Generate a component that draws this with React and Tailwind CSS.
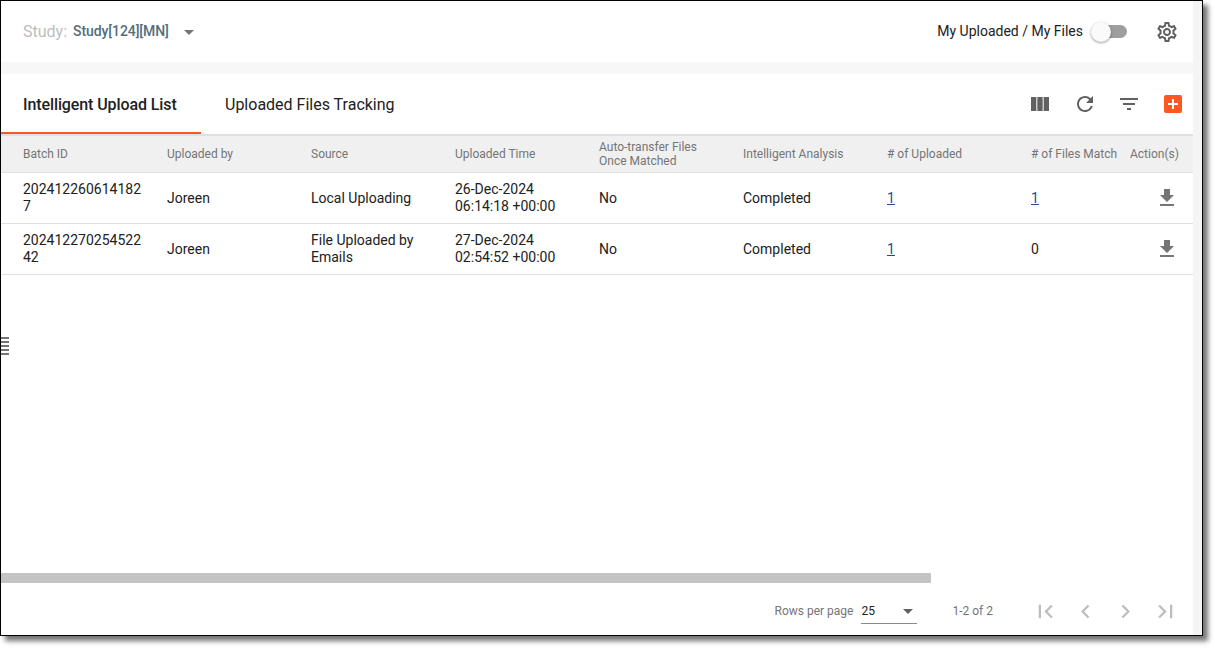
import React from "react";
import {
  MdArrowDropDown,
  MdChevronLeft,
  MdChevronRight,
  MdFilterList,
  MdFirstPage,
  MdGetApp,
  MdLastPage,
  MdOutlineSettings,
  MdRefresh,
  MdViewColumn,
} from "react-icons/md";

const columns = [
  "Batch ID",
  "Uploaded by",
  "Source",
  "Uploaded Time",
  "Auto-transfer Files Once Matched",
  "Intelligent Analysis",
  "# of Uploaded",
];

const rows = [
  {
    id: "2024122606141827",
    by: "Joreen",
    source: "Local Uploading",
    time: ["26-Dec-2024", "06:14:18 +00:00"],
    match: "1",
  },
  {
    id: "20241227025452242",
    by: "Joreen",
    source: "File Uploaded by Emails",
    time: ["27-Dec-2024", "02:54:52 +00:00"],
    match: "0",
  },
];

function Cell({ children, className = "" }) {
  return <div className={`w-[144px] shrink-0 pl-[22px] pr-[16px] ${className}`}>{children}</div>;
}

function CountLink({ value }) {
  return <a className="text-[#1a4f8f] underline">{value}</a>;
}

export default function App() {
  return (
    <div className="h-[648px] w-[1215px] bg-white font-['Roboto',sans-serif]">
      <div className="flex h-[636px] w-[1203px] border border-black shadow-[5px_5px_5px_rgba(0,0,0,0.55)]">
        <div className="flex w-[1192px] shrink-0 flex-col">
          <div className="flex h-[61px] items-center pl-[22px] pr-[14px]">
            <span className="text-[16px] text-[#bdbdbd]">Study:</span>
            <span className="ml-[6px] text-[14px] font-medium tracking-[-0.08px] text-[#546e7a]">Study[124][MN]</span>
            <MdArrowDropDown className="ml-[8px] text-[24px] text-[#757575]" />
            <span className="ml-auto text-[14px] text-[#212121]">My Uploaded / My Files</span>
            <div className="relative ml-[9px] h-[13px] w-[35px] rounded-full bg-[#9e9e9e]">
              <div className="absolute left-[-1px] top-[-3px] h-[20px] w-[20px] rounded-full bg-[#fafafa] shadow-[0_1px_3px_rgba(0,0,0,0.4)]" />
            </div>
            <MdOutlineSettings className="ml-[28px] text-[24px] text-[#616161]" />
          </div>

          <div className="h-[12px] bg-[#f7f7f7]" />

          <div className="flex h-[60px] items-stretch">
            <div className="flex w-[200px] items-center border-b-2 border-[#ff5722] pl-[22px] pt-[3px] text-[16px] font-medium tracking-[-0.1px] text-[#212121]">
              Intelligent Upload List
            </div>
            <div className="flex items-center pl-[24px] pt-[2px] text-[16px] text-[#212121]">Uploaded Files Tracking</div>
            <div className="ml-auto flex items-center pr-[11px] text-[#616161]">
              <MdViewColumn className="text-[24px]" />
              <MdRefresh className="ml-[21px] text-[24px]" />
              <MdFilterList className="ml-[20px] text-[24px]" />
              <div className="ml-[23px] flex h-[18px] w-[18px] items-center justify-center rounded-[2px] bg-[#ff5722]">
                <svg width="12" height="12" viewBox="0 0 12 12">
                  <path d="M5 1h2v4h4v2H7v4H5V7H1V5h4z" fill="#fff" />
                </svg>
              </div>
            </div>
          </div>

          <div className="flex h-[39px] items-center border-y border-t-2 border-y-[#e0e0e0] bg-[#f0f0f0] text-[12px] leading-[14px] text-[#757575]">
            {columns.map((col) => (
              <Cell key={col}>{col}</Cell>
            ))}
            <Cell className="!w-[121px] !pr-0 whitespace-nowrap"># of Files Match</Cell>
            <span className="whitespace-nowrap">Action(s)</span>
          </div>
          {rows.map((row) => (
            <div key={row.id} className="flex h-[51px] items-center border-b border-[#e0e0e0] text-[14px] leading-[17px] text-[#212121]">
              <Cell className="break-all !pr-[3px]">{row.id}</Cell>
              <Cell>{row.by}</Cell>
              <Cell>{row.source}</Cell>
              <Cell>
                {row.time[0]}
                <br />
                {row.time[1]}
              </Cell>
              <Cell>No</Cell>
              <Cell>Completed</Cell>
              <Cell>
                <CountLink value="1" />
              </Cell>
              <Cell className="!w-[121px] !pr-0">{row.match === "1" ? <CountLink value="1" /> : row.match}</Cell>
              <MdGetApp className="ml-[25px] text-[24px] text-[#757575]" />
            </div>
          ))}

          <div className="relative flex-1">
            <div className="absolute left-0 top-[62px] flex flex-col gap-[2px]">
              <div className="h-[2px] w-[8px] bg-[#757575]" />
              <div className="h-[2px] w-[8px] bg-[#757575]" />
              <div className="h-[2px] w-[8px] bg-[#757575]" />
              <div className="h-[2px] w-[8px] bg-[#757575]" />
              <div className="h-[2px] w-[8px] bg-[#757575]" />
            </div>
          </div>

          <div className="h-[10px] w-[930px] bg-[#c4c4c4]" />

          <div className="flex h-[52px] items-center justify-end pr-[14px] pt-[4px] text-[12px] text-[#757575]">
            <span>Rows per page</span>
            <div className="ml-[8px] flex h-[25px] w-[56px] items-center justify-between border-b border-[#8a8a8a] text-[12px] text-[#212121]">
              <span>25</span>
              <MdArrowDropDown className="mr-[-3px] text-[24px] text-[#616161]" />
            </div>
            <span className="ml-[35px]">1-2 of 2</span>
            <div className="ml-[39px] flex items-center gap-[13px] text-[27px] text-[#bdbdbd]">
              <MdFirstPage />
              <MdChevronLeft />
              <MdChevronRight />
              <MdLastPage />
            </div>
          </div>
        </div>

        <div className="flex-1 bg-[#f5f5f5]" />
      </div>
    </div>
  );
}
